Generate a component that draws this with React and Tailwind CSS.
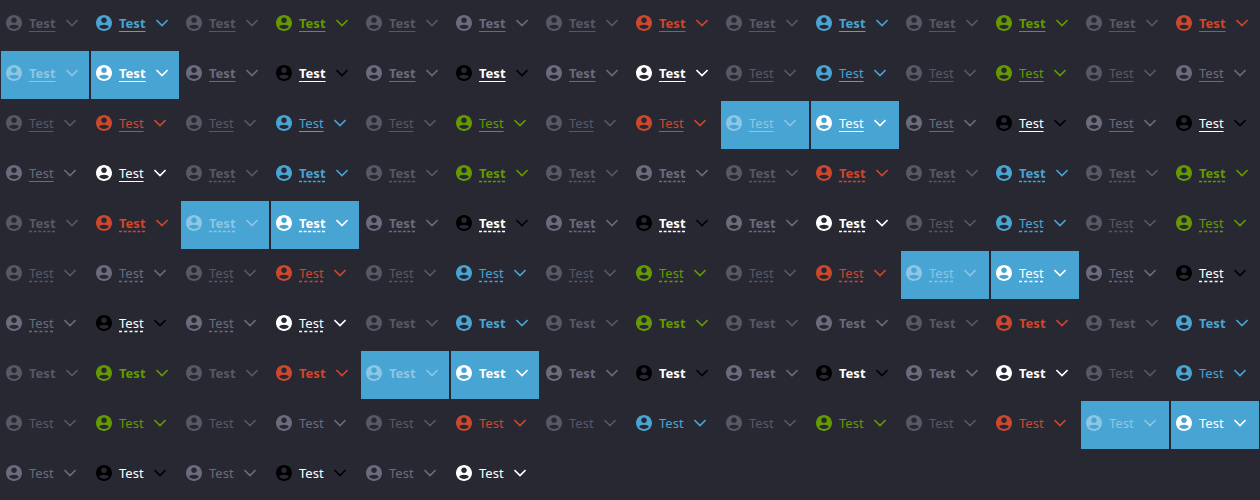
import React from "react";

const TONES = [
  { name: "Blue", text: "text-[#48a4d3]", icon: "text-[#48a4d3]", off: "text-[#565866]" },
  { name: "Green", text: "text-[#649a00]", icon: "text-[#649a00]", off: "text-[#565866]" },
  { name: "Gray", text: "text-[#6a6c7d]", icon: "text-[#6a6c7d]", off: "text-[#565866]" },
  { name: "Red", text: "text-[#cd472c]", icon: "text-[#cd472c]", off: "text-[#565866]" },
  { name: "Blue link", text: "text-[#48a4d3]", icon: "text-[#48a4d3]", off: "text-[#565866]" },
  { name: "Green link", text: "text-[#649a00]", icon: "text-[#649a00]", off: "text-[#565866]" },
  { name: "Red link", text: "text-[#cd472c]", icon: "text-[#cd472c]", off: "text-[#565866]" },
  { name: "Filled", text: "text-white", icon: "text-white", off: "text-[#8dc6e4]", fill: "bg-[#48a4d3]" },
  { name: "Dark icon", text: "text-white", icon: "text-black", off: "text-[#6a6c7d]" },
  { name: "Black icon", text: "text-white", icon: "text-black", off: "text-[#6a6c7d]" },
  { name: "White", text: "text-white", icon: "text-white", off: "text-[#6a6c7d]" },
];

const LINES = [
  "underline decoration-solid underline-offset-3",
  "underline decoration-dashed underline-offset-3",
  "",
];
const WEIGHTS = ["font-bold", "font-normal"];

const ITEMS = LINES.flatMap((line) =>
  WEIGHTS.flatMap((weight) =>
    TONES.flatMap((tone) => [true, false].map((disabled) => ({ line, weight, tone, disabled })))
  )
);

function AccountIcon({ className }) {
  return (
    <svg viewBox="2 2 20 20" fill="currentColor" aria-hidden="true" className={`size-4 shrink-0 ${className}`}>
      <path d="M12 2C6.48 2 2 6.48 2 12s4.48 10 10 10 10-4.48 10-10S17.52 2 12 2zm0 3c1.93 0 3.5 1.57 3.5 3.5S13.93 12 12 12s-3.5-1.57-3.5-3.5S10.07 5 12 5zm0 14.4c-2.5 0-4.71-1.08-6-2.72.03-1.69 3.2-2.58 6-2.58s5.97.89 6 2.58c-1.29 1.64-3.5 2.72-6 2.72z" />
    </svg>
  );
}

function ChevronIcon({ className }) {
  return (
    <svg viewBox="0 0 12 8" fill="none" stroke="currentColor" strokeWidth="1.7" aria-hidden="true" className={`h-2 w-3 shrink-0 ${className}`}>
      <path d="M.4 1 6 6.6 11.6 1" />
    </svg>
  );
}

function LinkButton({ line, weight, tone, disabled }) {
  const text = disabled ? tone.off : tone.text;
  const icon = disabled ? tone.off : tone.icon;
  return (
    <button type="button" disabled={disabled} className={`m-px flex h-12 items-center px-[5px] pb-1 ${tone.fill ?? ""}`}>
      <AccountIcon className={icon} />
      <span className={`ml-[7px] mr-[10px] text-[13px] leading-4 ${weight} ${line} ${text}`}>Test</span>
      <ChevronIcon className={icon} />
    </button>
  );
}

export default function App() {
  return (
    <main className="min-h-screen bg-[#282833] font-['Noto_Sans',sans-serif]">
      <div className="grid grid-cols-[repeat(auto-fill,minmax(90px,1fr))]">
        {ITEMS.map((item, i) => (
          <LinkButton key={i} {...item} />
        ))}
      </div>
    </main>
  );
}
